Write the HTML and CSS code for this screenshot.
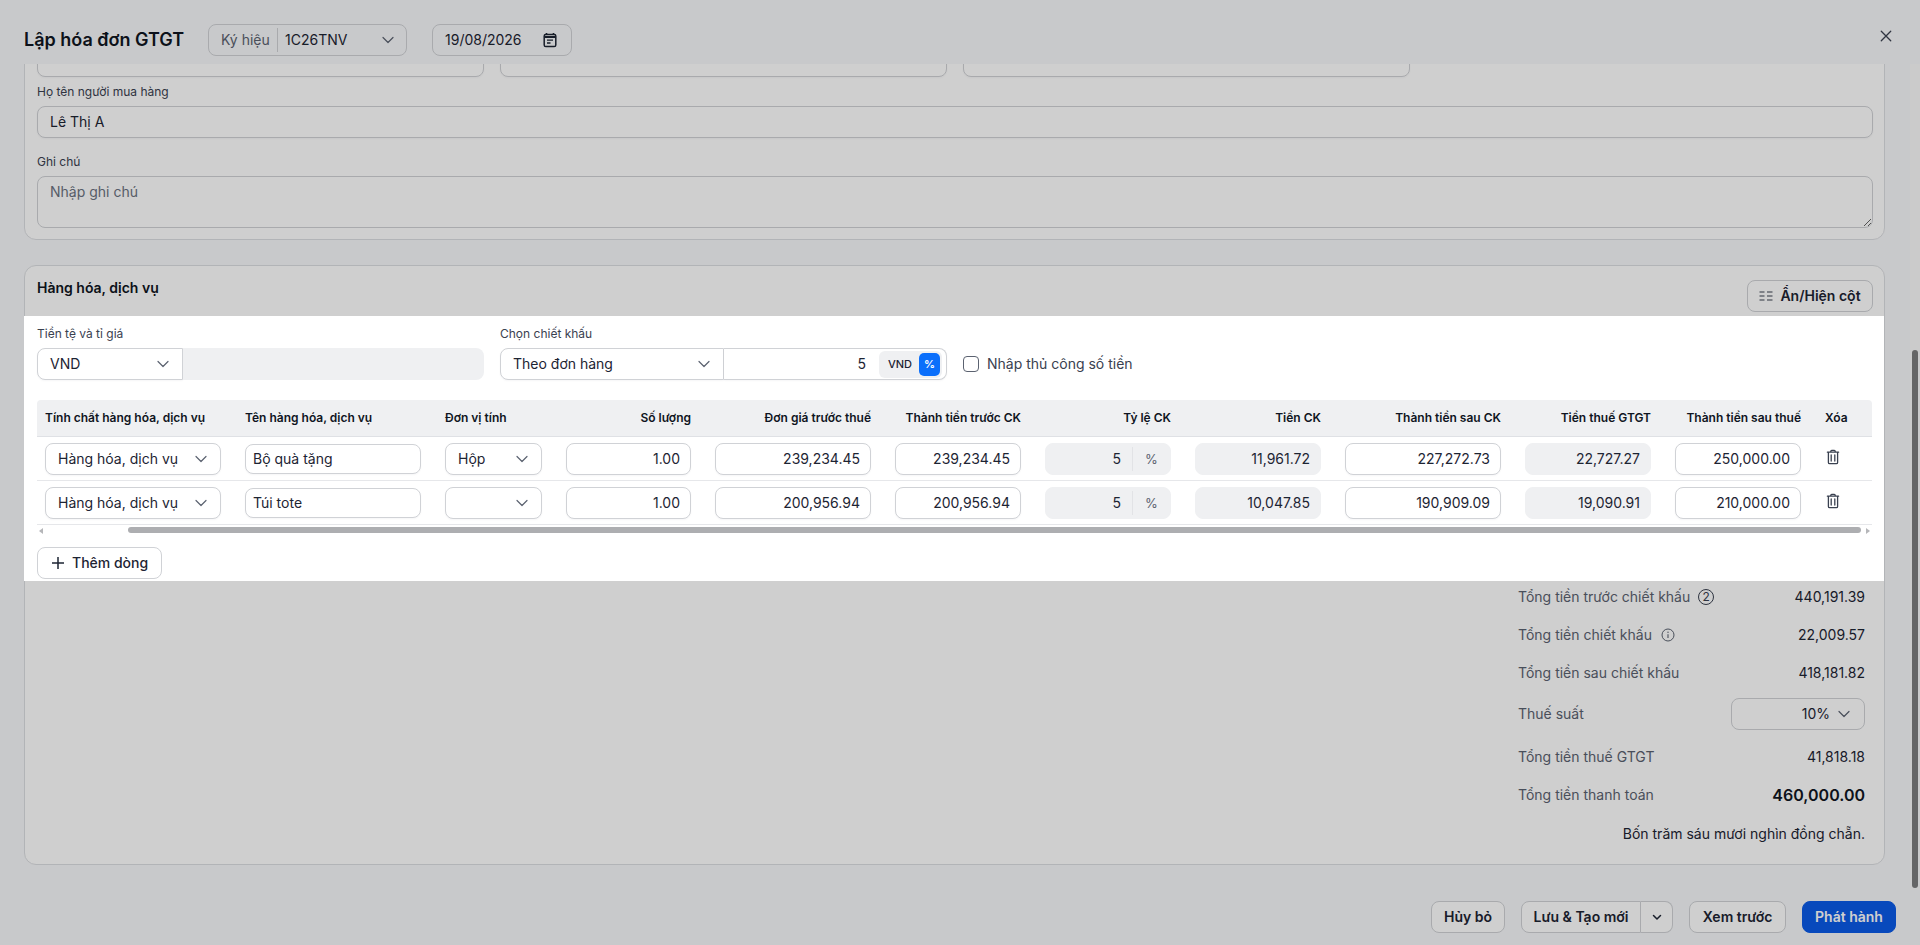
FILE: index.html
```html
<!DOCTYPE html>
<html lang="vi">
<head>
<meta charset="utf-8">
<title>Lập hóa đơn GTGT</title>
<link rel="stylesheet" href="styles.css">
</head>
<body>
<svg class="sprite" width="0" height="0" aria-hidden="true">
  <symbol id="chev" viewBox="0 0 16 16"><path d="M3 5.500l5 5 5-5" fill="none" stroke="currentColor" stroke-width="1.200" stroke-linecap="round" stroke-linejoin="round"/></symbol>
  <symbol id="trash" viewBox="0 0 16 16"><path d="M5.800 3V2.200a.9.9 0 0 1 .9-.9h2.600a.9.9 0 0 1 .9.9V3M2.400 3.200h11.200M3.400 3.200v10.200c0 .8.6 1.300 1.300 1.300h6.600c.7 0 1.300-.5 1.300-1.300V3.200M6.200 6v6M9.800 6v6" fill="none" stroke="currentColor" stroke-width="1.300" stroke-linecap="round"/></symbol>
</svg>
<div class="dialog">
  <header class="topbar">
    <h1 class="title">Lập hóa đơn GTGT</h1>
    <div class="field symbol-field">
      <span class="symbol-label">Ký hiệu</span>
      <span class="symbol-value">1C26TNV</span>
      <svg class="chev"><use href="#chev"/></svg>
    </div>
    <div class="field date-field">
      <span>19/08/2026</span>
      <svg class="cal" viewBox="0 0 16 16"><path d="M4.500 1v2M11.500 1v2" stroke="#1d2433" stroke-width="1.600" fill="none"/><rect x="2.200" y="2.500" width="11.600" height="12" rx="1.600" fill="none" stroke="#1d2433" stroke-width="1.500"/><path d="M2.500 5h11" stroke="#1d2433" stroke-width="2"/><path d="M5 8.200h6M5 11h3.500" stroke="#1d2433" stroke-width="1.300"/></svg>
    </div>
    <button class="close" aria-label="Đóng"><svg viewBox="0 0 16 16"><path d="M3.800 3.800l8.400 8.400M12.200 3.800l-8.400 8.400" stroke="currentColor" stroke-width="1.150" fill="none" stroke-linecap="round"/></svg></button>
  </header>

  <main class="scroller">
    <section class="card buyer">
      <div class="clipped-row">
        <div class="input"></div><div class="input"></div><div class="input"></div>
      </div>
      <label class="label">Họ tên người mua hàng</label>
      <div class="input wide">Lê Thị A</div>
      <label class="label note-label">Ghi chú</label>
      <textarea class="note" placeholder="Nhập ghi chú"></textarea>
    </section>

    <section class="card goods">
      <div class="goods-head">
        <h2 class="section-title">Hàng hóa, dịch vụ</h2>
        <button class="btn columns-btn"><svg class="cols" viewBox="0 0 14 14"><path d="M.500 3h5M.500 7h5M.500 11h5M8 3h5.500M8 7h5.500M8 11h5.500" stroke="#3a4150" stroke-width="1.100" fill="none"/></svg>Ẩn/Hiện cột</button>
      </div>

      <div class="highlight">
        <div class="options">
          <div class="opt-group currency">
            <label class="label">Tiền tệ và tỉ giá</label>
            <div class="joined">
              <div class="input select currency-select">VND<svg class="chev"><use href="#chev"/></svg></div>
              <div class="input readonly rate"></div>
            </div>
          </div>
          <div class="opt-group discount">
            <label class="label">Chọn chiết khấu</label>
            <div class="joined">
              <div class="input select discount-select">Theo đơn hàng<svg class="chev"><use href="#chev"/></svg></div>
              <div class="input discount-value">
                <span class="discount-num">5</span>
                <span class="toggle"><span class="toggle-item">VND</span><span class="toggle-item active">%</span></span>
              </div>
            </div>
          </div>
          <label class="manual"><span class="checkbox"></span>Nhập thủ công số tiền</label>
        </div>

        <div class="table">
          <div class="tr th-row">
            <div>Tính chất hàng hóa, dịch vụ</div>
            <div>Tên hàng hóa, dịch vụ</div>
            <div>Đơn vị tính</div>
            <div class="num">Số lượng</div>
            <div class="num">Đơn giá trước thuế</div>
            <div class="num">Thành tiền trước CK</div>
            <div class="num">Tỷ lệ CK</div>
            <div class="num">Tiền CK</div>
            <div class="num">Thành tiền sau CK</div>
            <div class="num">Tiền thuế GTGT</div>
            <div class="num">Thành tiền sau thuế</div>
            <div>Xóa</div>
          </div>
          <div class="tr">
            <div class="input select">Hàng hóa, dịch vụ<svg class="chev"><use href="#chev"/></svg></div>
            <div class="input name">Bộ quà tặng</div>
            <div class="input select unit">Hộp<svg class="chev"><use href="#chev"/></svg></div>
            <div class="input num">1.00</div>
            <div class="input num">239,234.45</div>
            <div class="input num">239,234.45</div>
            <div class="input readonly pct"><span class="pct-val">5</span><span class="pct-unit">%</span></div>
            <div class="input readonly num">11,961.72</div>
            <div class="input num">227,272.73</div>
            <div class="input readonly num">22,727.27</div>
            <div class="input num">250,000.00</div>
            <svg class="trash"><use href="#trash"/></svg>
          </div>
          <div class="tr">
            <div class="input select">Hàng hóa, dịch vụ<svg class="chev"><use href="#chev"/></svg></div>
            <div class="input name">Túi tote</div>
            <div class="input select unit"><svg class="chev"><use href="#chev"/></svg></div>
            <div class="input num">1.00</div>
            <div class="input num">200,956.94</div>
            <div class="input num">200,956.94</div>
            <div class="input readonly pct"><span class="pct-val">5</span><span class="pct-unit">%</span></div>
            <div class="input readonly num">10,047.85</div>
            <div class="input num">190,909.09</div>
            <div class="input readonly num">19,090.91</div>
            <div class="input num">210,000.00</div>
            <svg class="trash"><use href="#trash"/></svg>
          </div>
        </div>

        <div class="hscroll">
          <span class="arrow left"></span>
          <span class="hthumb"></span>
          <span class="arrow right"></span>
        </div>

        <button class="btn add-btn"><svg class="plus" viewBox="0 0 14 14"><path d="M7 1v12M1 7h12" stroke="#1d2433" stroke-width="1.500" fill="none"/></svg>Thêm dòng</button>
      </div>

      <div class="totals">
        <div class="total-row"><span class="t-label">Tổng tiền trước chiết khấu<span class="badge">2</span></span><span class="t-val">440,191.39</span></div>
        <div class="total-row"><span class="t-label">Tổng tiền chiết khấu<svg class="info" viewBox="0 0 14 14"><circle cx="7" cy="7" r="6" fill="none" stroke="currentColor" stroke-width="1"/><path d="M7 6.200v3.800" stroke="currentColor" stroke-width="1.100"/><circle cx="7" cy="4.300" r=".7" fill="currentColor"/></svg></span><span class="t-val">22,009.57</span></div>
        <div class="total-row"><span class="t-label">Tổng tiền sau chiết khấu</span><span class="t-val">418,181.82</span></div>
        <div class="total-row tax-row"><span class="t-label">Thuế suất</span><div class="input tax-select">10%<svg class="chev"><use href="#chev"/></svg></div></div>
        <div class="total-row"><span class="t-label">Tổng tiền thuế GTGT</span><span class="t-val">41,818.18</span></div>
        <div class="total-row grand"><span class="t-label">Tổng tiền thanh toán</span><span class="t-val">460,000.00</span></div>
        <div class="in-words">Bốn trăm sáu mươi nghìn đồng chẵn.</div>
      </div>
    </section>
  </main>

  <footer class="actions">
    <button class="btn cancel-btn">Hủy bỏ</button>
    <div class="split">
      <button class="btn split-main">Lưu &amp; Tạo mới</button>
      <button class="btn split-caret" aria-label="Thêm"><svg viewBox="0 0 12 12"><path d="M2.500 4.500L6 8l3.500-3.500" fill="none" stroke="#1d2433" stroke-width="1.500" stroke-linecap="round" stroke-linejoin="round"/></svg></button>
    </div>
    <button class="btn preview-btn">Xem trước</button>
    <button class="btn primary">Phát hành</button>
  </footer>
</div>
<div class="vscroll"><span class="vthumb"></span></div>
<div class="dim"></div>
</body>
</html>
```

FILE: styles.css
```css
* { box-sizing: border-box; }
html, body { height: 100%; }
body {
  margin: 0;
  overflow: hidden;
  background: #f7f8fa;
  color: #1d2433;
  font-family: Inter, "Noto Sans", sans-serif;
  font-size: 14px;
  line-height: 20px;
}
.sprite { position: absolute; }
.dim { position: fixed; inset: 0; background: rgba(0, 0, 0, .19); z-index: 10; pointer-events: none; }
.dialog { height: 945px; display: flex; flex-direction: column; }

.topbar { height: 64px; flex: none; display: flex; align-items: center; padding: 16px 24px 0; position: relative; }
.title { margin: 0 24px 0 0; font-size: 18px; line-height: 28px; font-weight: 600; white-space: nowrap; color: #0f1522; width: 160px; }
.field { height: 32px; border: 1px solid #d0d2d6; border-radius: 8px; background: #f7f8fa; display: flex; align-items: center; }
.symbol-field { width: 199px; padding: 0 10px 0 12px; }
.symbol-label { color: #5b6270; padding-right: 6px; border-right: 1px solid #d0d2d6; line-height: 24px; width: 57px; flex: none; white-space: nowrap; }
.symbol-value { padding-left: 7px; flex: 1; }
.chev { width: 16px; height: 16px; color: #5b6270; flex: none; }
.date-field { width: 140px; margin-left: 25px; padding: 0 13px 0 12px; justify-content: space-between; }
.cal { width: 16px; height: 16px; }
.close { position: absolute; top: 27px; right: 25px; width: 18px; height: 18px; padding: 0; border: 0; background: none; color: #3a4150; }
.close svg { width: 18px; height: 18px; display: block; }

.scroller { flex: 1; min-height: 0; overflow: hidden; padding: 0 35px 0 24px; }
.card { border: 1px solid #dcdee2; border-radius: 12px; background: #fff; }
.buyer { margin-top: -20px; height: 196px; padding: 0 11px 0 12px; overflow: hidden; }
.clipped-row { display: grid; grid-template-columns: repeat(4, 1fr); gap: 16px; height: 23px; align-items: end; }
.clipped-row .input { height: 32px; }
.label { display: block; font-size: 12px; line-height: 16px; color: #3a4150; margin: 0 0 6px; }
.buyer .clipped-row + .label { margin-top: 16px; }
.buyer .note-label { margin-top: 16px; }
.input { height: 32px; border: 1px solid #d0d2d6; border-radius: 8px; background: #fff; display: flex; align-items: center; padding: 0 12px; white-space: nowrap; min-width: 0; box-shadow: 0 1px 2px rgba(16, 24, 40, .04); }
.wide { width: 100%; }
.note { display: block; width: 100%; height: 52px; border: 1px solid #d0d2d6; border-radius: 8px; padding: 5px 12px; resize: vertical; font: inherit; outline: none; background: #fff; }
.note::placeholder { color: #6b7280; opacity: 1; }

.goods { margin-top: 25px; height: 600px; }
.goods-head { display: flex; justify-content: space-between; align-items: flex-start; padding: 14px 11px 0 12px; height: 50px; }
.section-title { margin: -2px 0 0; font-size: 14px; line-height: 20px; font-weight: 600; color: #0f1522; }
.btn { height: 32px; border: 1px solid #d0d2d6; border-radius: 8px; background: #fff; color: #1d2433; font: 600 14px/20px Inter, "Noto Sans", sans-serif; padding: 0 12px; display: inline-flex; align-items: center; white-space: nowrap; }
.columns-btn { width: 126px; justify-content: center; padding: 0; }
.cols { width: 14px; height: 14px; margin-right: 7px; }

.highlight { position: relative; z-index: 20; background: #fff; height: 265px; margin: 0 0 0 -1px; width: calc(100% + 1px); padding: 10px 12px 0 13px; }
.options { display: flex; align-items: flex-end; height: 54px; }
.opt-group .label { margin-bottom: 6px; }
.currency { width: 447px; }
.discount { width: 447px; margin-left: 16px; }
.joined { display: flex; }
.select { justify-content: space-between; }
.currency-select { width: 146px; border-radius: 8px 0 0 8px; }
.rate { flex: 1; background: #eff0f2; border: 0; border-radius: 0 8px 8px 0; }
.discount-select { width: 224px; border-radius: 8px 0 0 8px; }
.discount-value { flex: 1; border-left: 0; border-radius: 0 8px 8px 0; padding: 0 4px 0 12px; justify-content: flex-end; }
.discount-num { margin-right: 13px; }
.toggle { display: flex; align-items: center; background: #eff0f2; border-radius: 6px; height: 27px; width: 63px; padding: 2px; font-size: 11px; font-weight: 500; justify-content: flex-end; }
.toggle-item { flex: 1; text-align: center; }
.toggle-item.active { flex: none; width: 21px; height: 23px; background: #0b6ffb; color: #fff; border-radius: 5px; line-height: 23px; font-weight: 600; }
.manual { display: flex; align-items: center; margin-left: 16px; height: 32px; color: #3a4150; }
.checkbox { width: 16px; height: 16px; border: 1px solid #5b6270; border-radius: 4px; margin-right: 8px; }

.table { margin-top: 20px; }
.tr { display: grid; grid-template-columns: 176px 176px 96.500px 125.500px 156px 126px 126px 126px 156px 126px 126px 1fr; column-gap: 24px; align-items: center; padding: 0 8px; height: 44px; border-bottom: 1px solid #e6e7ea; }
.th-row { height: 37px; background: #eff0f2; border-radius: 4px 4px 0 0; font-size: 12px; font-weight: 600; color: #0f1522; white-space: nowrap; border-bottom: 1px solid #dfe1e5; }
.num { justify-content: flex-end; text-align: right; }
.input.select { padding-left: 12px; padding-right: 11px; }
.input.num { padding-right: 10px; }
.name { height: 30px; padding: 0 7px; }
.unit .chev { margin-left: auto; }
.readonly { background: #eff0f2; border-color: #eff0f2; color: #1d2433; box-shadow: none; }
.pct { padding: 0; justify-content: flex-end; }
.pct-val { padding-right: 11px; border-right: 1px solid #e2e3e6; line-height: 24px; }
.pct-unit { width: 37px; text-align: center; color: #5b6270; font-size: 13px; }
.trash { width: 16px; height: 16px; color: #3a4150; margin-top: -3px; }

.hscroll { display: flex; align-items: center; height: 6px; margin-top: 2px; position: relative; }
.hthumb { position: absolute; left: 91px; right: 11px; top: 0; height: 6px; border-radius: 3px; background: #adaeb1; }
.arrow { position: absolute; top: 1px; width: 0; height: 0; border-top: 3px solid transparent; border-bottom: 3px solid transparent; }
.arrow.left { left: 2px; border-right: 4px solid #b5b6b9; }
.arrow.right { right: 2px; border-left: 4px solid #b5b6b9; }
.add-btn { margin-top: 14px; width: 125px; padding: 0 0 0 13px; font-weight: 500; color: #1d2433; }
.plus { width: 14px; height: 14px; margin-right: 7px; }

.totals { padding: 6px 19px 0 0; margin-left: auto; width: 366px; }
.total-row { display: flex; justify-content: space-between; align-items: center; height: 20px; margin-bottom: 18px; }
.t-label { color: #5b6270; display: inline-flex; align-items: center; white-space: nowrap; }
.t-val { color: #1d2433; }
.badge { width: 16px; height: 16px; border: 1px solid #3a4150; border-radius: 50%; margin-left: 8px; font-size: 12px; line-height: 14px; text-align: center; color: #3a4150; }
.info { width: 14px; height: 14px; margin-left: 9px; color: #5b6270; }
.tax-row { height: 32px; margin-bottom: 17px; margin-top: -3px; }
.tax-select { width: 134px; justify-content: flex-end; padding: 0 12px 0 0; background: #fff; box-shadow: none; }
.tax-select .chev { margin-left: 6px; }
.grand { height: 24px; margin-top: -2px; margin-bottom: 17px; }
.grand .t-val { font-size: 16px; font-weight: 600; color: #0f1522; }
.in-words { text-align: right; color: #1d2433; }

.actions { height: 55px; flex: none; display: flex; justify-content: flex-end; align-items: flex-start; padding: 11px 24px 0 0; gap: 16px; }
.actions .btn { justify-content: center; }
.cancel-btn { width: 74px; padding: 0; }
.preview-btn { width: 97px; padding: 0; }
.split { display: flex; }
.split-main { border-radius: 8px 0 0 8px; width: 120px; padding: 0; }
.split-caret { border-radius: 0 8px 8px 0; border-left: 0; width: 32px; padding: 0; }
.split-caret svg { width: 12px; height: 12px; }
.primary { background: #0b5be8; border-color: #0b5be8; color: #fff; width: 94px; padding: 0; }

.vscroll { position: fixed; top: 64px; right: 0; width: 10px; height: 826px; background: #fafafa; }
.vthumb { position: absolute; top: 286px; left: 2px; width: 6px; height: 538px; border-radius: 3px; background: #7e7e7e; }
```
